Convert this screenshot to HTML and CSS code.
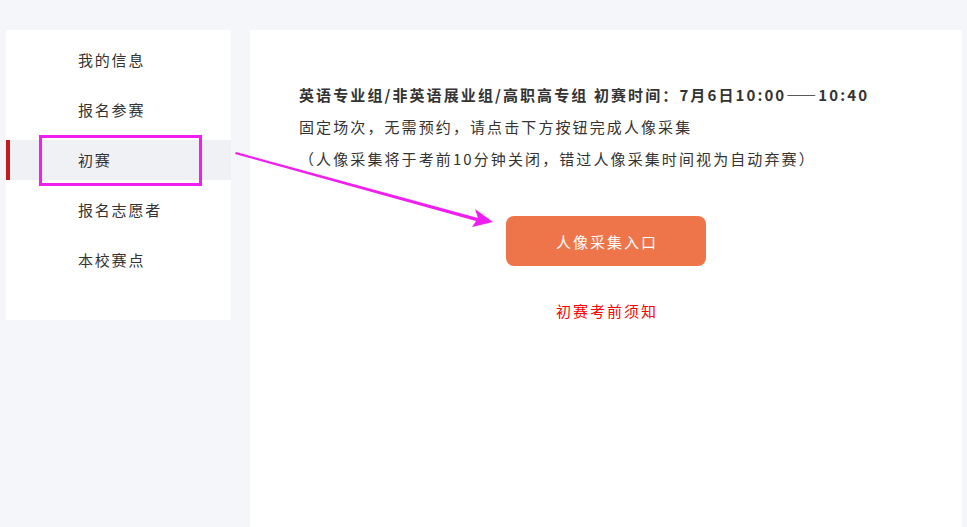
FILE: index.html
```html
<!DOCTYPE html>
<html lang="zh-CN">
<head>
<meta charset="utf-8">
<title>初赛</title>
<link rel="stylesheet" href="styles.css">
</head>
<body>
<div class="page">
  <aside class="sidebar">
    <ul class="menu">
      <li class="menu-item">我的信息</li>
      <li class="menu-item">报名参赛</li>
      <li class="menu-item active">初赛<span class="highlight"></span></li>
      <li class="menu-item">报名志愿者</li>
      <li class="menu-item">本校赛点</li>
    </ul>
  </aside>
  <main class="content">
    <div class="info">
      <p class="title">英语专业组/非英语展业组/高职高专组 初赛时间：7月6日10:00<span class="dash">——</span>10:40</p>
      <p>固定场次，无需预约，请点击下方按钮完成人像采集</p>
      <p class="note">（人像采集将于考前10分钟关闭，错过人像采集时间视为自动弃赛）</p>
    </div>
    <div class="actions">
      <button class="entry-btn">人像采集入口</button>
      <a class="notice">初赛考前须知</a>
    </div>
  </main>
  <svg class="arrow" width="967" height="527" viewBox="0 0 967 527">
    <path d="M236 152 L478 218 L475 209 L493 222 L472 227 L476 221 L235 154 Z" fill="#f01ef0"/>
  </svg>
</div>
</body>
</html>
```

FILE: styles.css
```css
html, body {
  margin: 0;
  padding: 0;
  background: #f5f6fa;
  font-family: "Noto Sans CJK SC", "Noto Sans", sans-serif;
  color: #333;
}
.page {
  position: relative;
  display: flex;
  align-items: flex-start;
  gap: 19px;
  padding: 30px 5px 0 6px;
  width: 967px;
  height: 527px;
  box-sizing: border-box;
  overflow: hidden;
}
.sidebar {
  width: 225px;
  flex: none;
  background: #fff;
  padding: 10px 0 40px;
}
.menu {
  list-style: none;
  margin: 0;
  padding: 0;
  display: flex;
  flex-direction: column;
  gap: 10px;
}
.menu-item {
  position: relative;
  height: 40px;
  line-height: 39px;
  padding-left: 72px;
  font-size: 15px;
  letter-spacing: 1.8px;
  color: #333;
}
.menu-item.active {
  background: #f0f1f5;
  border-left: 4px solid #c41d1f;
  padding-left: 68px;
}
.highlight {
  position: absolute;
  left: 29px;
  top: -5px;
  width: 157px;
  height: 45px;
  border: 3px solid #f01ef0;
}
.content {
  flex: 1;
  background: #fff;
  height: 497px;
  padding: 49px 49px 0;
  box-sizing: border-box;
}
.info p {
  margin: 0;
  font-size: 15px;
  line-height: 32px;
  letter-spacing: 2.1px;
  color: #333;
}
.info .title {
  font-weight: bold;
}
.dash {
  letter-spacing: 0;
  margin-right: 2px;
}
.actions {
  display: flex;
  flex-direction: column;
  align-items: center;
  margin-top: 41px;
}
.entry-btn {
  width: 200px;
  height: 50px;
  border: none;
  border-radius: 8px;
  background: #ee754a;
  color: #fff;
  font-family: inherit;
  font-size: 15px;
  letter-spacing: 2px;
  text-indent: 2px;
}
.notice {
  margin-top: 35px;
  font-size: 15px;
  line-height: 20px;
  letter-spacing: 2px;
  text-indent: 2px;
  color: #ff0000;
}
.arrow {
  position: absolute;
  left: 0;
  top: 0;
  pointer-events: none;
}
```
